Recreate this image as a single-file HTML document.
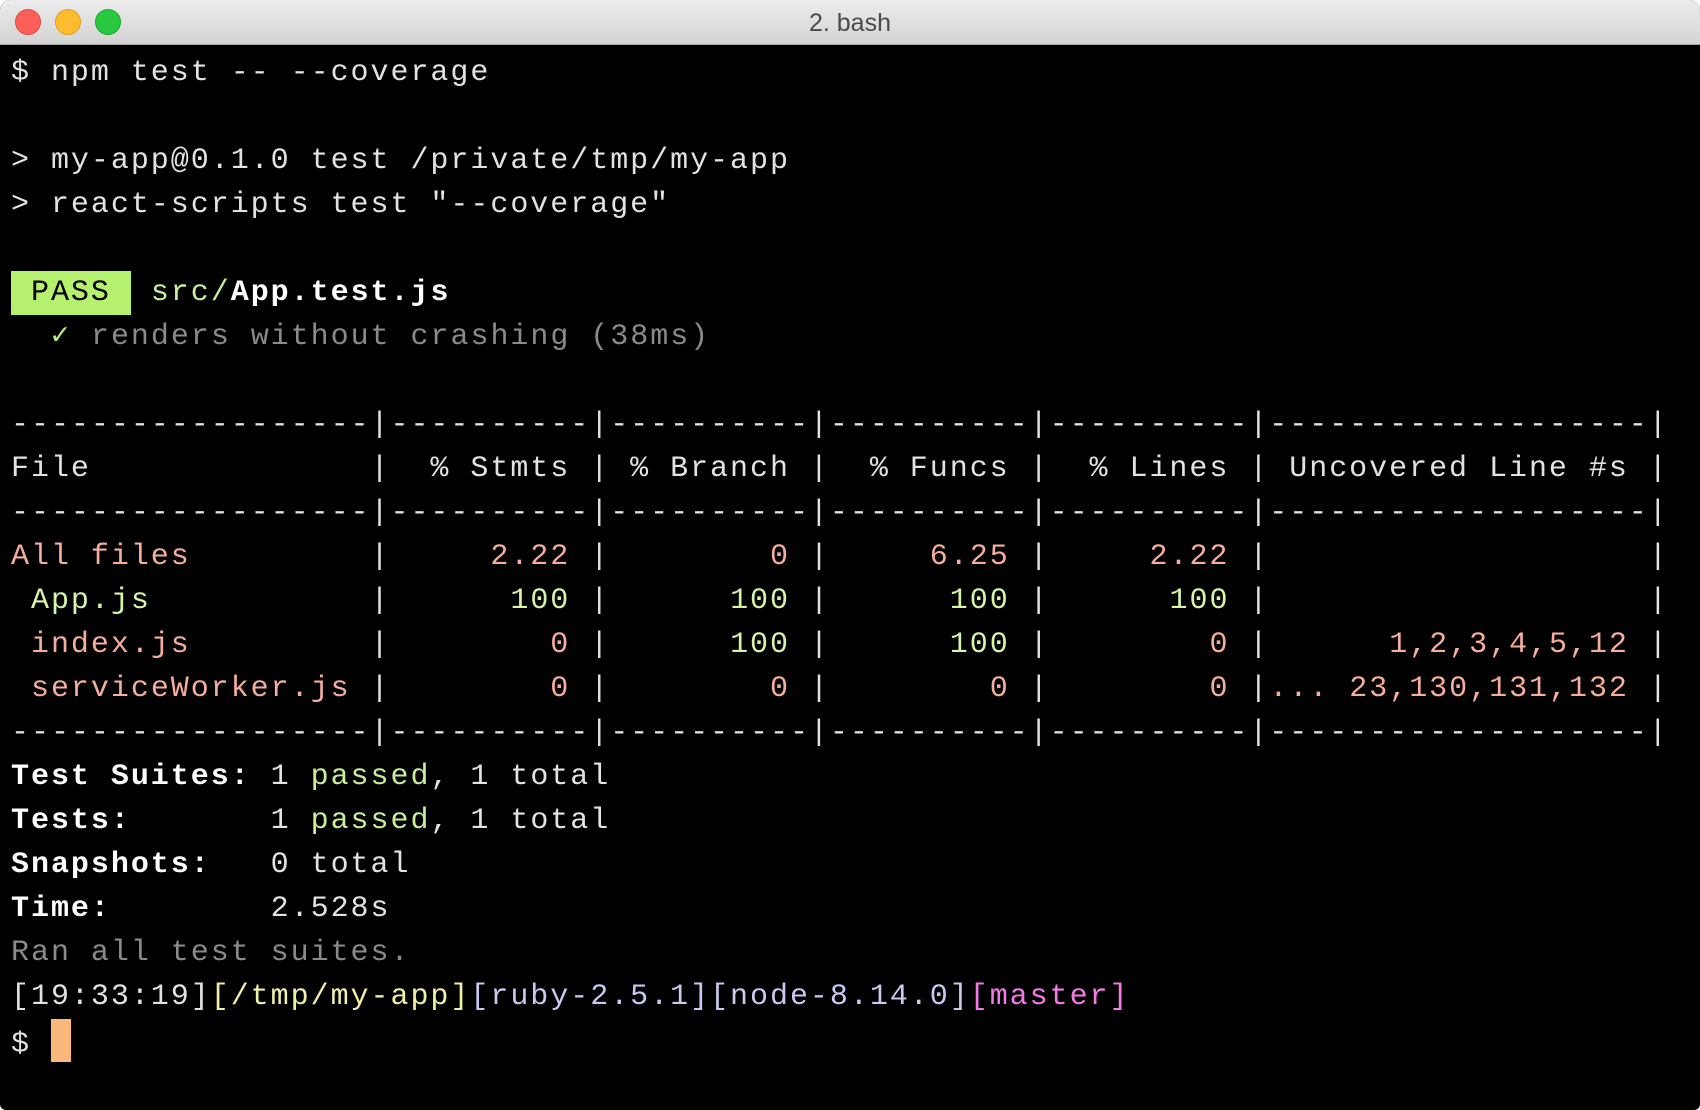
<!DOCTYPE html>
<html><head><meta charset="utf-8"><style>
html,body{margin:0;padding:0;width:1700px;height:1110px;background:#fff;overflow:hidden}
.win{position:absolute;left:0;top:0;width:1700px;height:1110px;background:#000;border-radius:10px 10px 6px 6px;overflow:hidden}
.tb{height:44px;background:linear-gradient(#ececec,#d4d4d4);border-bottom:1px solid #a8a8a8;position:relative}
.dot{position:absolute;top:9px;width:26px;height:26px;border-radius:50%}
.title{position:absolute;left:0;right:0;top:0;font:25px "Liberation Sans",sans-serif;line-height:46px;text-align:center;color:#4a4a4a}
pre{margin:0;position:absolute;left:11px;top:51px;font-family:"Liberation Mono",monospace;font-size:30px;letter-spacing:1.97px;line-height:44px;color:#e2e2e2}
b{font-weight:bold;color:#fff}
.pass{background:#b6f06f;color:#000;padding:5px 0}
.g{color:#c8ef9b}.gr{color:#8a8a8a}.s{color:#f5ad9c}.l{color:#d6f5a8}
.y{color:#f2f0a4}.v{color:#c9c9f2}.m{color:#f57ae6}
.cur{display:inline-block;width:20px;height:43px;background:#fbb87c;vertical-align:-10px}
.ck{color:#b6f06f;font-weight:bold}
</style></head><body><div class="win">
<div class="tb"><div class="dot" style="left:15px;background:#fc5f57;border:1px solid #de4a42;width:24px;height:24px"></div><div class="dot" style="left:55px;background:#fdbc2e;border:1px solid #dea123;width:24px;height:24px"></div><div class="dot" style="left:95px;background:#28c83f;border:1px solid #1fa931;width:24px;height:24px"></div><div class="title">2. bash</div></div>
<pre>$ npm test -- --coverage

&gt; my-app@0.1.0 test /private/tmp/my-app
&gt; react-scripts test "--coverage"

<span class="pass"> PASS </span> <span class="g">src/</span><b>App.test.js</b>
  <span class="ck">✓</span> <span class="gr">renders without crashing (38ms)</span>

------------------|----------|----------|----------|----------|-------------------|
File              |  % Stmts | % Branch |  % Funcs |  % Lines | Uncovered Line #s |
------------------|----------|----------|----------|----------|-------------------|
<span class="s">All files</span>         |     <span class="s">2.22</span> |        <span class="s">0</span> |     <span class="s">6.25</span> |     <span class="s">2.22</span> |                   |
 <span class="l">App.js</span>           |      <span class="l">100</span> |      <span class="l">100</span> |      <span class="l">100</span> |      <span class="l">100</span> |                   |
 <span class="s">index.js</span>         |        <span class="s">0</span> |      <span class="l">100</span> |      <span class="l">100</span> |        <span class="s">0</span> |      <span class="s">1,2,3,4,5,12</span> |
 <span class="s">serviceWorker.js</span> |        <span class="s">0</span> |        <span class="s">0</span> |        <span class="s">0</span> |        <span class="s">0</span> |<span class="s">... 23,130,131,132</span> |
------------------|----------|----------|----------|----------|-------------------|
<b>Test Suites: </b>1 <span class="g">passed</span>, 1 total
<b>Tests:       </b>1 <span class="g">passed</span>, 1 total
<b>Snapshots:   </b>0 total
<b>Time:        </b>2.528s
<span class="gr">Ran all test suites.</span>
[19:33:19]<span class="y">[/tmp/my-app]</span><span class="v">[ruby-2.5.1][node-8.14.0]</span><span class="m">[master]</span>
$ <span class="cur"></span></pre>
</div></body></html>
